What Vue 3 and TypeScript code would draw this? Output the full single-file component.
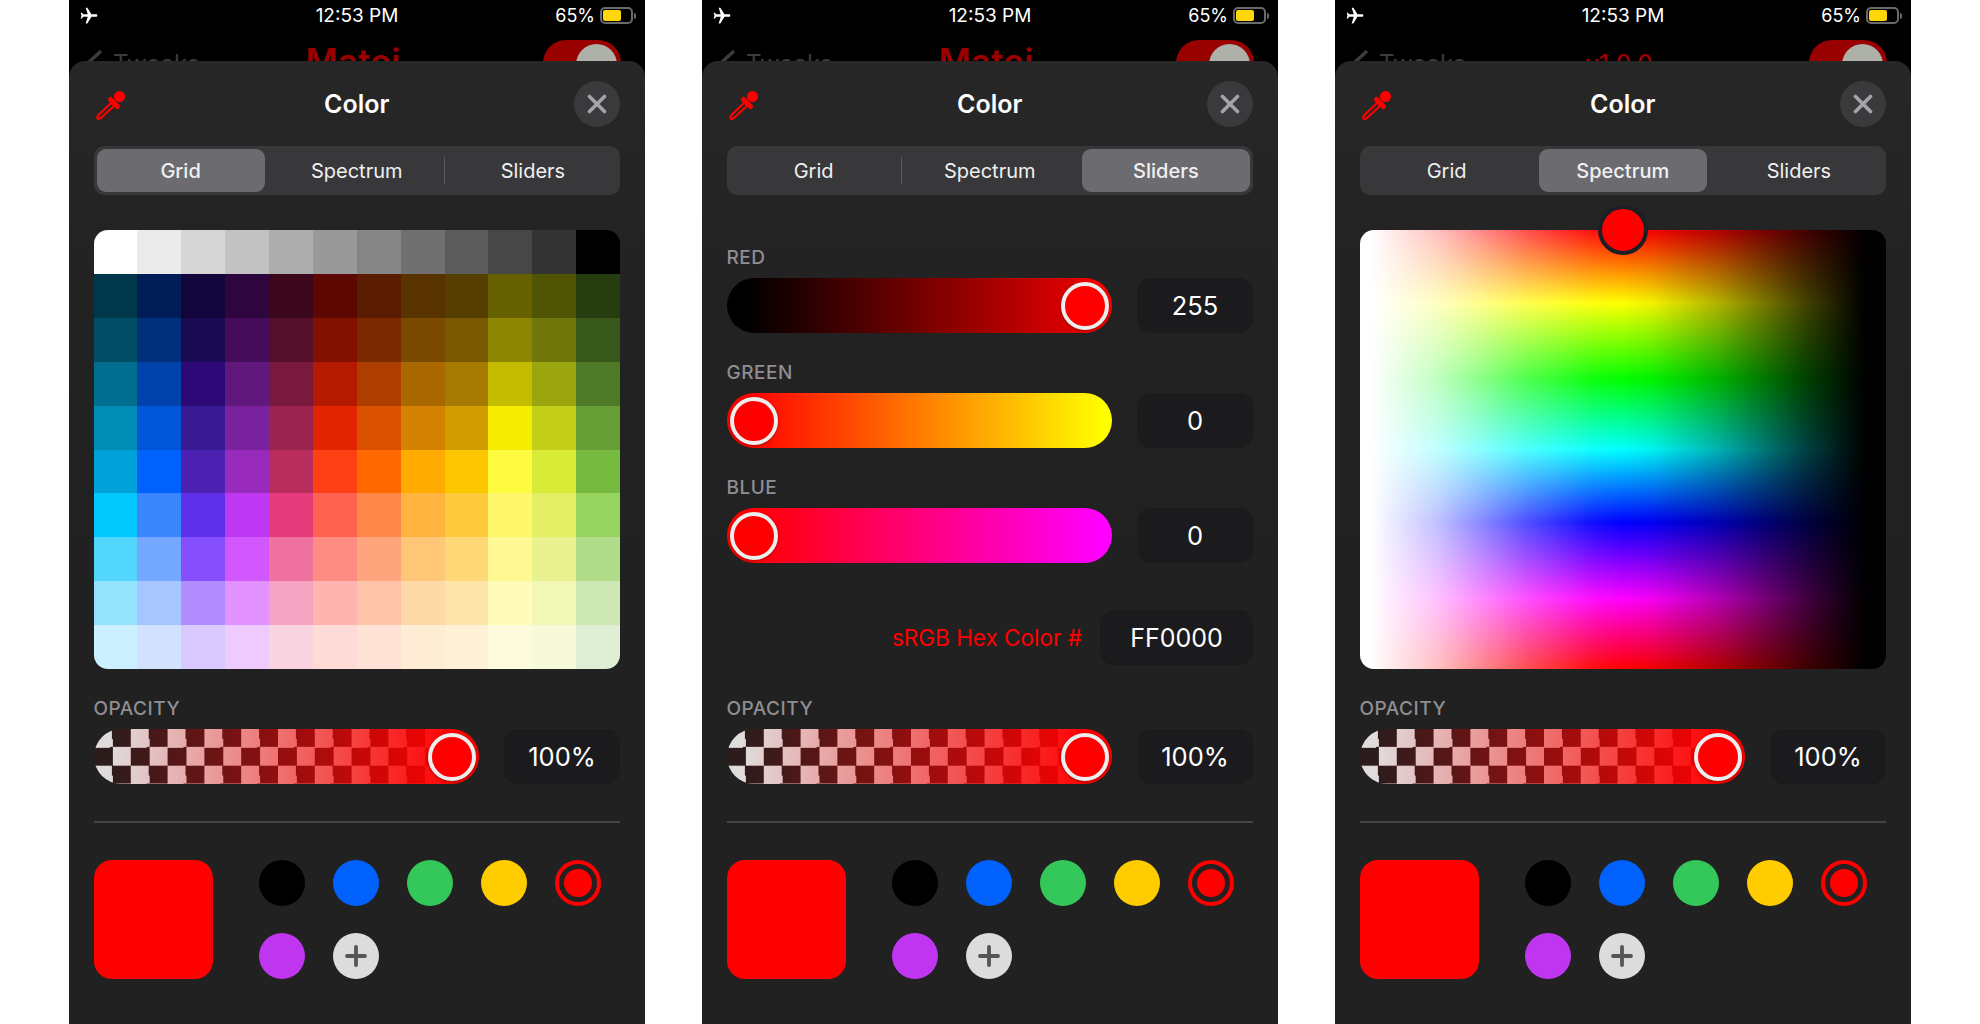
<script setup lang="ts">
type Tab = 'Grid' | 'Spectrum' | 'Sliders'

const screens: { tab: Tab; title: string; small: boolean }[] = [
  { tab: 'Grid', title: 'Matoi', small: false },
  { tab: 'Sliders', title: 'Matoi', small: false },
  { tab: 'Spectrum', title: 'v1.0.0', small: true },
]

const grid = [
  ['#ffffff', '#ebebeb', '#d6d6d6', '#c2c2c2', '#adadad', '#999999', '#858585', '#707070', '#5c5c5c', '#474747', '#333333', '#000000'],
  ['#00374a', '#011d57', '#11053b', '#2e063d', '#3c071b', '#5c0701', '#5a1c00', '#583300', '#563d00', '#666100', '#4f5504', '#263e0f'],
  ['#004d65', '#012f7b', '#1a0a52', '#450d59', '#551029', '#831100', '#7b2900', '#7a4a00', '#785800', '#8d8602', '#6f760a', '#38571a'],
  ['#016e8f', '#0042a9', '#2c0977', '#61187c', '#791a3d', '#b51a00', '#ad3e00', '#a96800', '#a67b01', '#c4bc00', '#9ba50e', '#4e7a27'],
  ['#008cb4', '#0056d6', '#371a94', '#7a219e', '#99244f', '#e22400', '#da5100', '#d38301', '#d19d01', '#f5ec00', '#c3d017', '#669d34'],
  ['#00a1d8', '#0061fd', '#4d22b2', '#982abc', '#b92d5d', '#ff4015', '#ff6a00', '#ffab01', '#fcc700', '#fefb41', '#d8ec37', '#76bb40'],
  ['#01c7fc', '#3a87fd', '#5e30eb', '#be38f3', '#e63b7a', '#fe6250', '#fe8648', '#feb43f', '#fecb3e', '#fff76b', '#e4ef65', '#96d35f'],
  ['#52d6fc', '#74a7ff', '#864ffd', '#d357fe', '#ee719e', '#ff8c82', '#fea57d', '#fec777', '#fed877', '#fff994', '#eaf28f', '#b1dd8b'],
  ['#93e3fc', '#a7c6ff', '#b18cfe', '#e292fe', '#f4a4c0', '#ffb5af', '#ffc5ab', '#fed9a8', '#fde4a8', '#fffbb9', '#f1f7b7', '#cde8b5'],
  ['#cbf0ff', '#d2e2fe', '#d8c9fe', '#efcaff', '#f9d3e0', '#ffdbd8', '#ffe2d6', '#feecd4', '#fef1d5', '#fdfbdd', '#f6fadb', '#dfeed4'],
].flat()

const sliders = [
  { label: 'RED', value: '255', cls: 'red', end: true },
  { label: 'GREEN', value: '0', cls: 'green', end: false },
  { label: 'BLUE', value: '0', cls: 'blue', end: false },
]

const presets = ['#000000', '#0061fd', '#34c759', '#ffcc00']
</script>

<template>
  <div class="page">
    <div v-for="s in screens" :key="s.tab" class="phone">
      <div class="status">
        <svg class="plane" viewBox="0 0 24 24"><path fill="#fff" transform="rotate(90 12 12)" d="M21 16v-2l-8-5V3.5c0-.83-.67-1.5-1.5-1.5S10 2.67 10 3.5V9l-8 5v2l8-2.5V19l-2 1.5V22l3.5-1 3.5 1v-1.5L13 19v-5.5l8 2.5z" /></svg>
        <span class="time">12:53 PM</span>
        <div class="status-right">
          <span>65%</span>
          <span class="battery"><i></i></span>
          <span class="nub"></span>
        </div>
      </div>

      <div class="nav">
        <div class="back">
          <svg width="18" height="30" viewBox="0 0 18 30"><path d="M16 3 L3 15 L16 27" fill="none" stroke="#3c3c3c" stroke-width="3.5" /></svg>
          <span>Tweaks</span>
        </div>
        <div class="nav-title" :class="{ small: s.small }">{{ s.title }}</div>
        <div class="toggle"><i></i></div>
      </div>

      <div class="sheet">
        <div class="head">
          <svg class="dropper" width="30" height="34" viewBox="0 0 30 34">
            <circle cx="24.5" cy="9.5" r="5.5" fill="#f00" />
            <path d="M15.5 12.5 L22.5 19.5" stroke="#f00" stroke-width="5" stroke-linecap="round" />
            <path d="M16.5 15.5 L19.5 18.5 L6.5 30.5 Q3.5 32.5 2.5 31.5 Q1.5 30.5 4 27.5 Z" fill="none" stroke="#f00" stroke-width="2.2" stroke-linejoin="round" />
          </svg>
          <span class="title">Color</span>
          <button class="close">
            <svg width="20" height="20" viewBox="0 0 20 20"><path d="M2.5 2.5 L17.5 17.5 M17.5 2.5 L2.5 17.5" stroke="#a3a3a8" stroke-width="3.6" stroke-linecap="round" /></svg>
          </button>
        </div>

        <div class="segments">
          <span class="seg" :class="{ on: s.tab === 'Grid' }">Grid</span>
          <i class="sep" :class="{ hide: s.tab !== 'Sliders' }"></i>
          <span class="seg" :class="{ on: s.tab === 'Spectrum' }">Spectrum</span>
          <i class="sep" :class="{ hide: s.tab !== 'Grid' }"></i>
          <span class="seg" :class="{ on: s.tab === 'Sliders' }">Sliders</span>
        </div>

        <div class="main">
          <div v-if="s.tab === 'Grid'" class="grid">
            <span v-for="(c, i) in grid" :key="i" :style="{ background: c }"></span>
          </div>

          <div v-else-if="s.tab === 'Spectrum'" class="spectrum">
            <span class="spot"></span>
          </div>

          <div v-else class="rows">
            <div v-for="r in sliders" :key="r.label" class="block">
              <div class="label">{{ r.label }}</div>
              <div class="row">
                <div class="track" :class="[r.cls, { end: r.end }]"><span class="thumb"></span></div>
                <div class="value">{{ r.value }}</div>
              </div>
            </div>
            <div class="hex">
              <span class="hex-label">sRGB Hex Color #</span>
              <div class="value hex-value">FF0000</div>
            </div>
          </div>
        </div>

        <div class="block opacity">
          <div class="label">OPACITY</div>
          <div class="row">
            <div class="track checker end"><span class="thumb"></span></div>
            <div class="value">100%</div>
          </div>
        </div>

        <div class="divider"></div>

        <div class="bottom">
          <div class="current"></div>
          <div class="presets">
            <span v-for="c in presets" :key="c" class="dot" :style="{ background: c }"></span>
            <span class="dot picked"><i></i></span>
            <span class="dot" style="background: #bf35f0"></span>
            <span class="dot add">
              <svg width="24" height="24" viewBox="0 0 24 24"><path d="M12 3 V21 M3 12 H21" stroke="#555" stroke-width="3.8" stroke-linecap="round" /></svg>
            </span>
          </div>
        </div>
      </div>
    </div>
  </div>
</template>

<style scoped>
.page {
  display: flex;
  gap: 57px;
  height: 1024px;
  padding-left: 69px;
  background: #fff;
  overflow: hidden;
  font-family: Inter, 'Liberation Sans', sans-serif;
  color: #fff;
}

.phone {
  position: relative;
  width: 576px;
  height: 1024px;
  background: #000;
  overflow: hidden;
}

.status {
  display: flex;
  align-items: center;
  height: 31px;
  padding: 0 9px 0 10px;
  font-size: 18px;
  position: relative;
}

.plane {
  width: 20px;
  height: 20px;
}

.time {
  position: absolute;
  left: 0;
  right: 0;
  text-align: center;
  font-size: 19px;
}

.status-right {
  margin-left: auto;
  display: flex;
  align-items: center;
}

.battery {
  margin-left: 5px;
  display: block;
  box-sizing: border-box;
  width: 33px;
  height: 17px;
  border: 2px solid #6a6a6a;
  border-radius: 5px;
  padding: 1px;
}

.battery i {
  display: block;
  width: 18px;
  height: 100%;
  border-radius: 2px;
  background: #ffd60a;
}

.nub {
  width: 2px;
  height: 6px;
  margin-left: 1px;
  background: #6a6a6a;
  border-radius: 0 2px 2px 0;
}

.nav {
  display: grid;
  grid-template-columns: 1fr auto 1fr;
  align-items: start;
  padding: 9px 24px 0 16px;
}

.back {
  display: flex;
  align-items: flex-start;
  gap: 10px;
  font-size: 24px;
  color: #3c3c3c;
  line-height: 38px;
  margin-top: 5px;
}

.back svg {
  margin-top: 3px;
}

.nav-title {
  font-size: 35px;
  font-weight: 600;
  color: #9a0000;
  line-height: 44px;
  margin-top: -1px;
}

.nav-title.small {
  font-size: 24px;
  font-weight: 500;
  margin-top: 2px;
  color: #a00000;
}

.toggle {
  justify-self: end;
  display: flex;
  justify-content: flex-end;
  width: 78px;
  height: 46px;
  box-sizing: border-box;
  padding: 4px;
  border-radius: 23px;
  background: #990000;
}

.toggle i {
  width: 41px;
  height: 41px;
  border-radius: 50%;
  background: #aeb0aa;
}

.sheet {
  position: absolute;
  left: 0;
  right: 0;
  top: 61px;
  bottom: 0;
  box-sizing: border-box;
  padding: 20px 25px 0 24.5px;
  border-radius: 16px 16px 0 0;
  background: linear-gradient(#272727, #232222 25%, #212121 60%);
}

.head {
  position: relative;
  display: flex;
  align-items: center;
  justify-content: space-between;
  height: 46px;
}

.dropper {
  margin-left: 1px;
}

.title {
  position: absolute;
  left: 0;
  right: 0;
  text-align: center;
  font-size: 25px;
  font-weight: 600;
}

.close {
  position: relative;
  display: flex;
  align-items: center;
  justify-content: center;
  width: 46px;
  height: 46px;
  padding: 0;
  border: 0;
  border-radius: 50%;
  background: #3a3a3c;
}

.segments {
  display: grid;
  grid-template-columns: 1fr 1px 1fr 1px 1fr;
  column-gap: 3.5px;
  align-items: center;
  height: 49px;
  box-sizing: border-box;
  margin-top: 19px;
  padding: 3px;
  border-radius: 10px;
  background: #38383b;
  font-size: 20px;
}

.seg {
  display: flex;
  align-items: center;
  justify-content: center;
  height: 43px;
  border-radius: 9px;
  color: #f0f0f0;
}

.seg.on {
  background: #6b6b70;
  font-weight: 500;
}

.sep {
  height: 27px;
  background: #5a5a5e;
}

.sep.hide {
  visibility: hidden;
}

.main {
  height: 439px;
  margin-top: 35px;
}

.grid {
  display: grid;
  grid-template-columns: repeat(12, 1fr);
  grid-template-rows: repeat(10, 1fr);
  height: 100%;
  border-radius: 14px;
  overflow: hidden;
}

.spectrum {
  position: relative;
  height: 100%;
  border-radius: 14px;
  background:
    linear-gradient(to right, #fff 2%, rgba(255, 255, 255, 0.75) 15%, rgba(255, 255, 255, 0.3) 32%, rgba(255, 255, 255, 0.06) 44%, rgba(0, 0, 0, 0) 50%, rgba(0, 0, 0, 0.06) 56%, rgba(0, 0, 0, 0.3) 68%, rgba(0, 0, 0, 0.75) 85%, #000 96%),
    linear-gradient(#f00 0%, #ff0 16.6%, #0f0 34%, #0ff 50%, #00f 66.6%, #f0f 84%, #f00 100%);
}

.spot {
  position: absolute;
  left: 50%;
  top: -25px;
  box-sizing: border-box;
  width: 50px;
  height: 50px;
  margin-left: -25px;
  border: 4px solid #1c1f24;
  border-radius: 50%;
  background: #f00;
}

.rows {
  padding-top: 18px;
  display: flex;
  flex-direction: column;
  gap: 30px;
}

.block .label {
  height: 20px;
  line-height: 20px;
  margin-bottom: 10px;
  font-size: 19px;
  letter-spacing: 0.5px;
  font-weight: 500;
  color: #8e8e93;
}

.row {
  display: flex;
  gap: 25px;
}

.track {
  flex: 1;
  display: flex;
  align-items: center;
  box-sizing: border-box;
  height: 55px;
  padding: 0 3.5px;
  border-radius: 28px;
}

.track.end {
  justify-content: flex-end;
}

.track.red {
  background: linear-gradient(to right, #000 5%, #d00 90%, #f00 96%);
}

.track.green {
  background: linear-gradient(to right, #f00 5%, #ff0 98%);
}

.track.blue {
  background: linear-gradient(to right, #f00 5%, #f0f 98%);
}

.track.checker {
  background:
    linear-gradient(to right, rgba(255, 0, 0, 0) 4%, #f00 94%),
    repeating-conic-gradient(#2c1c1c 0 25%, #e0dcdc 0 50%) 0 0 / 36.8px 36.7px;
}

.thumb {
  box-sizing: border-box;
  width: 48px;
  height: 48px;
  border: 4.5px solid #eeeeee;
  border-radius: 50%;
  background: #f00;
  box-shadow: 0 1px 3px rgba(0, 0, 0, 0.35);
}

.value {
  display: flex;
  align-items: center;
  justify-content: center;
  width: 116px;
  height: 55px;
  border-radius: 14px;
  background: #1b1b1d;
  font-size: 25.5px;
}

.hex {
  display: flex;
  align-items: center;
  justify-content: flex-end;
  gap: 18px;
  margin-top: 17px;
}

.hex-label {
  font-size: 22.5px;
  color: #f00;
}

.hex-value {
  width: 153px;
  font-size: 25px;
}

.opacity {
  margin-top: 30px;
}

.divider {
  height: 1.5px;
  margin-top: 37px;
  background: #454545;
}

.bottom {
  display: flex;
  margin-top: 37px;
}

.current {
  width: 119px;
  height: 119px;
  border-radius: 18px;
  background: #f00;
}

.presets {
  display: grid;
  grid-template-columns: repeat(5, 46px);
  grid-auto-rows: 46px;
  gap: 27px 28px;
  margin-left: 46px;
}

.dot {
  display: flex;
  align-items: center;
  justify-content: center;
  box-sizing: border-box;
  width: 46px;
  height: 46px;
  border-radius: 50%;
}

.picked {
  border: 4.5px solid #f00;
}

.picked i {
  width: 28px;
  height: 28px;
  border-radius: 50%;
  background: #f00;
}

.add {
  background: #dcdcdc;
}
</style>

<style>
html,
body {
  background: #fff;
}
</style>
